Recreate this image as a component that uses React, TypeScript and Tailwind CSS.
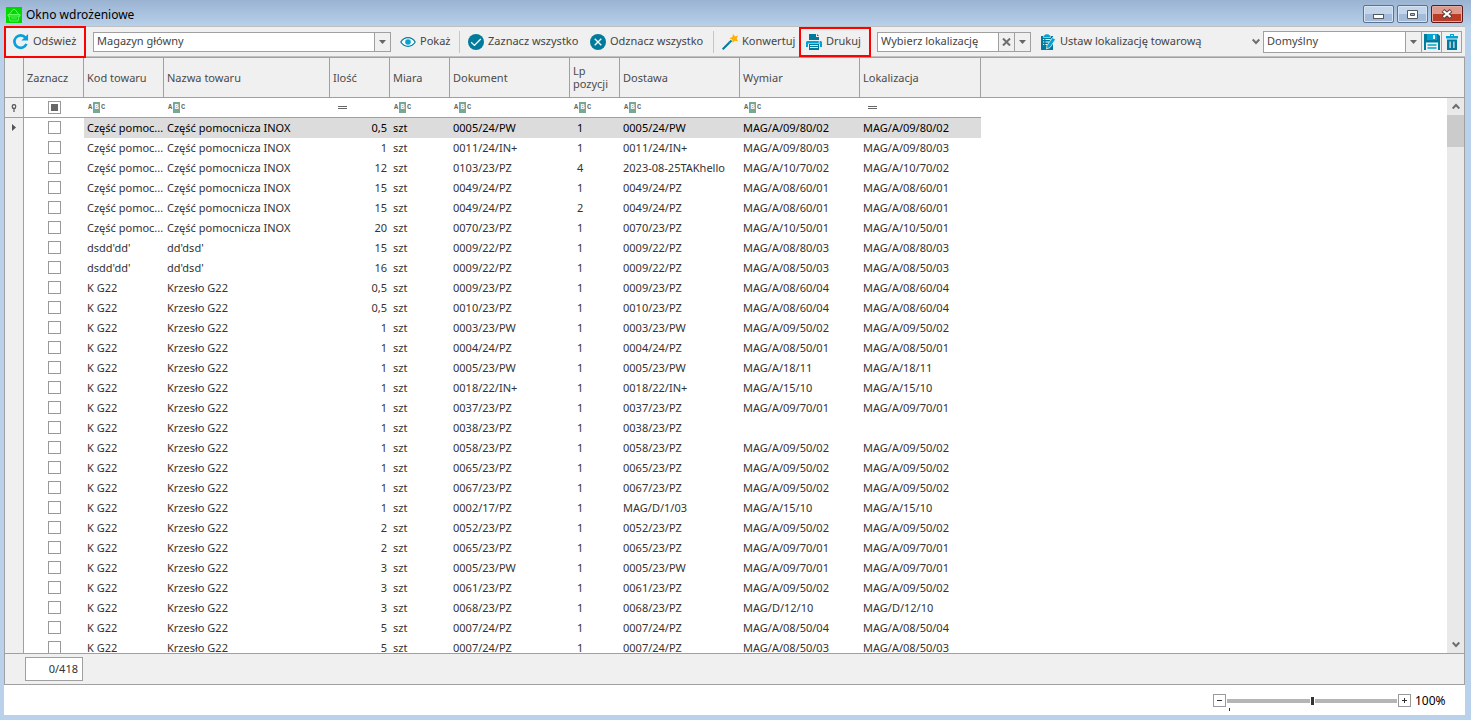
import type { ReactNode } from "react";

type Row = [
  kod: string,
  nazwa: string,
  ilosc: string,
  dokument: string,
  lp: string,
  dostawa: string,
  wymiar: string,
  lokalizacja: string
];

const INOX = "Część pomocnicza INOX";
const INOX_KOD = "Część pomoc...";
const KRZESLO = "Krzesło G22";

const rows: Row[] = [
  [INOX_KOD, INOX, "0,5", "0005/24/PW", "1", "0005/24/PW", "MAG/A/09/80/02", "MAG/A/09/80/02"],
  [INOX_KOD, INOX, "1", "0011/24/IN+", "1", "0011/24/IN+", "MAG/A/09/80/03", "MAG/A/09/80/03"],
  [INOX_KOD, INOX, "12", "0103/23/PZ", "4", "2023-08-25TAKhello", "MAG/A/10/70/02", "MAG/A/10/70/02"],
  [INOX_KOD, INOX, "15", "0049/24/PZ", "1", "0049/24/PZ", "MAG/A/08/60/01", "MAG/A/08/60/01"],
  [INOX_KOD, INOX, "15", "0049/24/PZ", "2", "0049/24/PZ", "MAG/A/08/60/01", "MAG/A/08/60/01"],
  [INOX_KOD, INOX, "20", "0070/23/PZ", "1", "0070/23/PZ", "MAG/A/10/50/01", "MAG/A/10/50/01"],
  ["dsdd'dd'", "dd'dsd'", "15", "0009/22/PZ", "1", "0009/22/PZ", "MAG/A/08/80/03", "MAG/A/08/80/03"],
  ["dsdd'dd'", "dd'dsd'", "16", "0009/22/PZ", "1", "0009/22/PZ", "MAG/A/08/50/03", "MAG/A/08/50/03"],
  ["K G22", KRZESLO, "0,5", "0009/23/PZ", "1", "0009/23/PZ", "MAG/A/08/60/04", "MAG/A/08/60/04"],
  ["K G22", KRZESLO, "0,5", "0010/23/PZ", "1", "0010/23/PZ", "MAG/A/08/60/04", "MAG/A/08/60/04"],
  ["K G22", KRZESLO, "1", "0003/23/PW", "1", "0003/23/PW", "MAG/A/09/50/02", "MAG/A/09/50/02"],
  ["K G22", KRZESLO, "1", "0004/24/PZ", "1", "0004/24/PZ", "MAG/A/08/50/01", "MAG/A/08/50/01"],
  ["K G22", KRZESLO, "1", "0005/23/PW", "1", "0005/23/PW", "MAG/A/18/11", "MAG/A/18/11"],
  ["K G22", KRZESLO, "1", "0018/22/IN+", "1", "0018/22/IN+", "MAG/A/15/10", "MAG/A/15/10"],
  ["K G22", KRZESLO, "1", "0037/23/PZ", "1", "0037/23/PZ", "MAG/A/09/70/01", "MAG/A/09/70/01"],
  ["K G22", KRZESLO, "1", "0038/23/PZ", "1", "0038/23/PZ", "", ""],
  ["K G22", KRZESLO, "1", "0058/23/PZ", "1", "0058/23/PZ", "MAG/A/09/50/02", "MAG/A/09/50/02"],
  ["K G22", KRZESLO, "1", "0065/23/PZ", "1", "0065/23/PZ", "MAG/A/09/50/02", "MAG/A/09/50/02"],
  ["K G22", KRZESLO, "1", "0067/23/PZ", "1", "0067/23/PZ", "MAG/A/09/50/02", "MAG/A/09/50/02"],
  ["K G22", KRZESLO, "1", "0002/17/PZ", "1", "MAG/D/1/03", "MAG/A/15/10", "MAG/A/15/10"],
  ["K G22", KRZESLO, "2", "0052/23/PZ", "1", "0052/23/PZ", "MAG/A/09/50/02", "MAG/A/09/50/02"],
  ["K G22", KRZESLO, "2", "0065/23/PZ", "1", "0065/23/PZ", "MAG/A/09/70/01", "MAG/A/09/70/01"],
  ["K G22", KRZESLO, "3", "0005/23/PW", "1", "0005/23/PW", "MAG/A/09/70/01", "MAG/A/09/70/01"],
  ["K G22", KRZESLO, "3", "0061/23/PZ", "1", "0061/23/PZ", "MAG/A/09/50/02", "MAG/A/09/50/02"],
  ["K G22", KRZESLO, "3", "0068/23/PZ", "1", "0068/23/PZ", "MAG/D/12/10", "MAG/D/12/10"],
  ["K G22", KRZESLO, "5", "0007/24/PZ", "1", "0007/24/PZ", "MAG/A/08/50/04", "MAG/A/08/50/04"],
  ["K G22", KRZESLO, "5", "0007/24/PZ", "1", "0007/24/PZ", "MAG/A/08/50/03", "MAG/A/08/50/03"],
];

const columns = [
  { name: "Zaznacz", width: "w-[60px]", filter: "check" },
  { name: "Kod towaru", width: "w-[80px]", filter: "abc" },
  { name: "Nazwa towaru", width: "w-[166px]", filter: "abc" },
  { name: "Ilość", width: "w-[60px]", filter: "eq" },
  { name: "Miara", width: "w-[60px]", filter: "abc" },
  { name: "Dokument", width: "w-[120px]", filter: "abc" },
  { name: "Lp pozycji", width: "w-[50px]", filter: "abc" },
  { name: "Dostawa", width: "w-[120px]", filter: "abc" },
  { name: "Wymiar", width: "w-[120px]", filter: "abc" },
  { name: "Lokalizacja", width: "w-[121px]", filter: "eq" },
];

function BasketIcon() {
  return (
    <svg width="16" height="16" viewBox="0 0 16 16" className="bg-[#00d800]" fill="none" stroke="#7dff7d">
      <path d="M2 7.500h12v1.500H2zM3 9l1 5h8l1-5M3.500 7L7 2.500h2L12.500 7M6 10v2.500M8 10v2.500M10 10v2.500" strokeWidth=".8" />
    </svg>
  );
}

function RefreshIcon() {
  return (
    <svg width="17" height="17" viewBox="0 0 18 18" fill="none">
      <path d="M14.300 5A6.600 6.600 0 1 0 15.300 11.500" stroke="#0a9fdc" strokeWidth="2.800" />
      <path d="M17 1v7h-7z" fill="#0a9fdc" />
    </svg>
  );
}

function EyeIcon() {
  return (
    <svg width="16" height="16" viewBox="0 0 16 16" fill="none">
      <path d="M.8 8C4.500 2.200 11.500 2.200 15.200 8 11.500 13.800 4.500 13.800.8 8z" fill="#fff" stroke="#007b9c" strokeWidth="1.200" />
      <circle cx="8" cy="8" r="2.800" fill="#00a3d3" />
    </svg>
  );
}

function CheckCircleIcon() {
  return (
    <svg width="16" height="16" viewBox="0 0 16 16" fill="none">
      <circle cx="8" cy="8" r="8" fill="#007b9c" />
      <path d="M3.200 8.200l3.200 3.200 6.400-6.400" stroke="#fff" strokeWidth="1.300" />
    </svg>
  );
}

function CrossCircleIcon() {
  return (
    <svg width="16" height="16" viewBox="0 0 16 16" fill="none">
      <circle cx="8" cy="8" r="8" fill="#007b9c" />
      <path d="M4.700 4.700l6.600 6.600M11.300 4.700l-6.600 6.600" stroke="#fff" strokeWidth="1.300" />
    </svg>
  );
}

function WandIcon() {
  return (
    <svg width="16" height="16" viewBox="0 0 16 16" fill="none">
      <path d="M.7 15.300L9.500 6.500" stroke="#007b9c" strokeWidth="2" />
      <path d="M7 8.800l1-1" stroke="#00a3d3" strokeWidth="2" />
      <path d="M11 0l2 2.400L16 1.500l-1.300 3L16 7.300l-3.200-.6-2.200 2-.3-3L7.500 4.200l2.900-1.300z" fill="#ffb000" />
    </svg>
  );
}

function PrinterIcon() {
  return (
    <svg width="16" height="16" viewBox="0 0 16 16">
      <path d="M3 0h7v3h3v3H3z" fill="#007b9c" />
      <path d="M11 0l2 2h-2z" fill="#007b9c" />
      <path d="M1 7h14l1 1v5h-2V9.500H2V13H0V8z" fill="#00a3d3" />
      <path d="M3 10h10v6H3z" fill="#007b9c" />
      <path d="M4 11.500h8M4 13.500h8" stroke="#f0f0f0" />
      <path d="M12.500 8h1.500" stroke="#fff" />
    </svg>
  );
}

function ClipboardIcon() {
  return (
    <svg width="16" height="16" viewBox="0 0 16 16">
      <path d="M1 2h12v14H1z" fill="#007b9c" />
      <path d="M3.500 1H5V0h4v1h1.500v2.500h-7z" fill="#00a3d3" stroke="#f0f0f0" strokeWidth=".6" />
      <path d="M3 5.500h1.200M5.500 5.500h5M3 8h1.200M5.500 8h3.500M3 10.500h1.200M5.500 10.500h2" stroke="#fff" />
      <path d="M12.500 3.500l3 2L10 13.500 6.500 15l.5-3.500z" fill="#00a3d3" stroke="#f0f0f0" strokeWidth=".8" />
    </svg>
  );
}

function SaveIcon() {
  return (
    <svg width="16" height="16" viewBox="0 0 16 16">
      <path d="M0 0h14l2 2v14H0z" fill="#007b9c" />
      <path d="M3 0h10v6H3z" fill="#00a3d3" />
      <path d="M9 1h2v4H9z" fill="#f0f0f0" />
      <path d="M2 8.500h12V16H2z" fill="#f0f0f0" />
      <path d="M3.500 11h9M3.500 14h9" stroke="#00a3d3" strokeWidth="1.300" />
    </svg>
  );
}

function TrashIcon() {
  return (
    <svg width="16" height="16" viewBox="0 0 16 16">
      <path d="M2 2h4V0h4v2h4v2.500H2zM7 1v1h2V1z" fill="#00a3d3" fillRule="evenodd" />
      <path d="M3 5.500h10V16H3zM5.500 7.500V14h1.200V7.500zM9.300 7.500V14h1.200V7.500z" fill="#007b9c" fillRule="evenodd" />
    </svg>
  );
}

function ArrowDown() {
  return (
    <svg width="7" height="4" viewBox="0 0 7 4">
      <path d="M0 0h7L3.500 4z" fill="#666" />
    </svg>
  );
}

function Chevron({ up = false }: { up?: boolean }) {
  return (
    <svg width="8" height="7" viewBox="0 0 8 7" fill="none" stroke="#6e6e6e" strokeWidth="2">
      <path d={up ? "M.7 5.500L4 2l3.300 3.500" : "M.7 1.500L4 5l3.300-3.500"} />
    </svg>
  );
}

function Separator() {
  return <div className="h-[22px] w-px shrink-0 bg-[#c6c6c6]" />;
}

interface ToolButtonProps {
  icon: ReactNode;
  label: string;
  className: string;
}

function ToolButton({ icon, label, className }: ToolButtonProps) {
  return (
    <button type="button" className={`flex shrink-0 items-center gap-1 whitespace-nowrap ${className}`}>
      {icon}
      {label}
    </button>
  );
}

interface ComboProps {
  label: string;
  value: string;
  className: string;
}

function Combo({ label, value, className }: ComboProps) {
  return (
    <div className={`grid shrink-0 border border-[#a0a0a0] bg-white ${className}`}>
      <select
        aria-label={label}
        className="col-start-1 row-start-1 h-full w-full appearance-none pr-5 pl-[3px] outline-none"
      >
        <option>{value}</option>
      </select>
      <span className="pointer-events-none col-start-1 row-start-1 flex h-full w-4 items-center justify-center justify-self-end border-l border-[#a0a0a0] bg-[#f0f0f0]">
        <ArrowDown />
      </span>
    </div>
  );
}

function FilterMark({ kind }: { kind: string }) {
  if (kind === "check") {
    return (
      <input
        type="checkbox"
        aria-label="Zaznacz wszystkie wiersze"
        className="ml-6 block size-[13px] appearance-none border border-[#999] bg-[#666] shadow-[inset_0_0_0_2px_#fff]"
      />
    );
  }
  if (kind === "eq") {
    return (
      <svg width="9" height="3" viewBox="0 0 9 3" className="ml-2">
        <path d="M0 .5h9M0 2.500h9" stroke="#666" />
      </svg>
    );
  }
  return (
    <span className="ml-1 flex h-[11px] items-center font-['Liberation_Mono',monospace] text-[7px] leading-[11px] font-bold text-[#666]">
      <span className="w-[5px]">A</span>
      <span className="w-[7px] bg-[#7aa794] text-center text-white">B</span>
      <span className="pl-px">C</span>
    </span>
  );
}

function TitleBar() {
  return (
    <header className="flex h-[26px] shrink-0 items-center justify-between bg-linear-to-b from-[#9ab3d1] to-[#b8d0ea] pr-2 pl-[6px]">
      <div className="flex items-center gap-1 pt-1">
        <BasketIcon />
        <h1 className="text-xs text-black">Okno wdrożeniowe</h1>
      </div>
      <div className="flex gap-[3px] pt-[2px]">
        <button
          type="button"
          aria-label="Minimalizuj"
          className="flex h-[18px] w-[31px] items-center justify-center rounded-xs border border-[#5b7290] bg-linear-to-b from-[#c3d5ea] from-50% to-[#a3bbd8] to-50% pt-1 shadow-[inset_0_0_0_1px_#d5e3f2]"
        >
          <span className="h-[5px] w-[11px] border border-[#53585f] bg-white" />
        </button>
        <button
          type="button"
          aria-label="Przywróć"
          className="flex h-[18px] w-[31px] items-center justify-center rounded-xs border border-[#5b7290] bg-linear-to-b from-[#c3d5ea] from-50% to-[#a3bbd8] to-50% shadow-[inset_0_0_0_1px_#d5e3f2]"
        >
          <svg width="11" height="9" viewBox="0 0 11 9">
            <path d="M.5.5h10v8H.5z" fill="#fff" stroke="#53585f" />
            <path d="M3.500 3.500h4v2h-4z" fill="#a3bbd8" stroke="#53585f" />
          </svg>
        </button>
        <button
          type="button"
          aria-label="Zamknij"
          className="flex h-[18px] w-8 items-center justify-center rounded-xs border border-[#5c1a18] bg-linear-to-b from-[#dd9a8c] from-50% to-[#bb3d27] to-50% shadow-[inset_0_0_0_1px_#e5ada2]"
        >
          <svg width="12" height="10" viewBox="0 0 12 10">
            <path d="M2 1.500l8 7M10 1.500l-8 7" stroke="#53383c" strokeWidth="4" />
            <path d="M2.500 2l7 6M9.500 2l-7 6" stroke="#fff" strokeWidth="2.200" />
          </svg>
        </button>
      </div>
    </header>
  );
}

function Toolbar() {
  return (
    <div className="flex h-[31px] shrink-0 items-center border-y border-[#c0c0c0] bg-[#f0f0f0] pr-[3px] text-[11px] text-[#444]">
      <ToolButton
        icon={<RefreshIcon />}
        label="Odśwież"
        className="relative z-10 h-8 w-[82px] border-2 border-[#fd0000] pl-[6px]"
      />
      <Combo label="Magazyn" value="Magazyn główny" className="ml-[7px] h-5 w-[298px]" />
      <ToolButton icon={<EyeIcon />} label="Pokaż" className="ml-[9px] w-[59px]" />
      <Separator />
      <ToolButton icon={<CheckCircleIcon />} label="Zaznacz wszystko" className="ml-2 w-[122px]" />
      <ToolButton icon={<CrossCircleIcon />} label="Odznacz wszystko" className="w-[123px]" />
      <Separator />
      <ToolButton icon={<WandIcon />} label="Konwertuj" className="ml-2 w-[77px]" />
      <ToolButton
        icon={<PrinterIcon />}
        label="Drukuj"
        className="relative z-10 h-[30px] w-[72px] border-2 border-[#fd0000] pl-[5px]"
      />
      <div className="ml-[6px] flex h-5 w-[154px] shrink-0 border border-[#a0a0a0] bg-white">
        <input
          type="text"
          aria-label="Lokalizacja"
          defaultValue="Wybierz lokalizację"
          className="min-w-0 flex-1 pl-[3px] outline-none"
        />
        <button
          type="button"
          aria-label="Wyczyść"
          className="flex w-4 items-center justify-center border-l border-[#a0a0a0] bg-[#f0f0f0]"
        >
          <svg width="9" height="8" viewBox="0 0 9 8">
            <path d="M1 .5l7 7M8 .5l-7 7" stroke="#6e6e6e" strokeWidth="2" />
          </svg>
        </button>
        <button
          type="button"
          aria-label="Rozwiń listę"
          className="flex w-4 items-center justify-center border-l border-[#a0a0a0] bg-[#f0f0f0]"
        >
          <ArrowDown />
        </button>
      </div>
      <ToolButton icon={<ClipboardIcon />} label="Ustaw lokalizację towarową" className="ml-[9px]" />
      <div className="ml-auto flex shrink-0 items-center gap-[3px]">
        <button type="button" aria-label="Więcej">
          <Chevron />
        </button>
        <div className="flex">
          <Combo label="Układ" value="Domyślny" className="h-[22px] w-[159px]" />
          <button
            type="button"
            aria-label="Zapisz układ"
            className="flex h-[22px] w-5 items-center justify-center border-y border-r border-[#a0a0a0]"
          >
            <SaveIcon />
          </button>
          <button
            type="button"
            aria-label="Usuń układ"
            className="flex h-[22px] w-5 items-center justify-center border-y border-r border-[#a0a0a0]"
          >
            <TrashIcon />
          </button>
        </div>
      </div>
    </div>
  );
}

function Grid() {
  return (
    <table className="w-full table-fixed border-separate border-spacing-0 text-[11px] leading-[13px] text-[#333]">
      <colgroup>
        <col className="w-[19px]" />
        {columns.map((c) => (
          <col key={c.name} className={c.width} />
        ))}
        <col />
      </colgroup>
      <thead>
        <tr className="h-10 bg-[#f0f0f0] text-left text-[#4b4b4b]">
          <th className="border-r border-b border-[#a0a0a0] p-0" />
          {columns.map((c) => (
            <th key={c.name} className="border-r border-b border-[#a0a0a0] pt-0 pr-1 pb-px pl-[3px] font-normal">
              {c.name}
            </th>
          ))}
          <th className="border-b border-[#a0a0a0] p-0" />
        </tr>
        <tr className="h-5">
          <td className="border-r border-b border-[#a0a0a0] bg-[#f0f0f0] p-0">
            <svg width="6" height="8" viewBox="0 0 6 8" className="mx-auto">
              <circle cx="3" cy="2.500" r="1.800" fill="none" stroke="#555" strokeWidth="1.200" />
              <path d="M1.500 4.500h3M3 4.500V8" stroke="#555" strokeWidth="1.200" />
            </svg>
          </td>
          {columns.map((c) => (
            <td key={c.name} className="border-b border-[#a0a0a0] p-0">
              <FilterMark kind={c.filter} />
            </td>
          ))}
          <td className="p-0" />
        </tr>
      </thead>
      <tbody>
        {rows.map(([kod, nazwa, ilosc, dokument, lp, dostawa, wymiar, lokalizacja], i) => (
          <tr
            key={i}
            className={
              i === 0
                ? "h-5 text-black *:[td]:pt-0 *:[td]:pb-px [&>td:nth-child(n+3):nth-child(-n+11)]:bg-[#dcdcdc]"
                : "h-5 *:[td]:pt-0 *:[td]:pb-px"
            }
          >
            <td className="border-r border-[#a0a0a0] bg-[#f0f0f0] px-0">
              {i === 0 && (
                <svg width="4" height="7" viewBox="0 0 4 7" className="mx-auto">
                  <path d="M0 0l4 3.500L0 7z" fill="#555" />
                </svg>
              )}
            </td>
            <td className="px-0">
              <input
                type="checkbox"
                aria-label={`Zaznacz wiersz ${i + 1}`}
                className="ml-6 block size-[13px] appearance-none border border-[#999] bg-white checked:bg-[#666]"
              />
            </td>
            <td className="pr-0 pl-[3px] whitespace-nowrap">{kod}</td>
            <td className="truncate pr-1 pl-[3px]">{nazwa}</td>
            <td className="pr-[3px] pl-0 text-right">{ilosc}</td>
            <td className="pr-1 pl-[3px]">szt</td>
            <td className="pr-1 pl-[3px]">{dokument}</td>
            <td className="pr-1 pl-[7px]">{lp}</td>
            <td className="pr-1 pl-[3px] whitespace-nowrap">{dostawa}</td>
            <td className="pr-1 pl-[3px]">{wymiar}</td>
            <td className="pr-1 pl-[3px]">{lokalizacja}</td>
            <td />
          </tr>
        ))}
      </tbody>
    </table>
  );
}

function ScrollBar() {
  return (
    <div className="flex w-[17px] shrink-0 flex-col bg-[#e9e9e9]">
      <div className="h-10 shrink-0 border-b border-[#a0a0a0] bg-[#f0f0f0]" />
      <button type="button" aria-label="Przewiń w górę" className="flex h-[17px] items-center justify-center">
        <Chevron up />
      </button>
      <div className="h-8 bg-[#cbcbcb]" />
      <button
        type="button"
        aria-label="Przewiń w dół"
        className="mt-auto flex h-[17px] items-center justify-center"
      >
        <Chevron />
      </button>
    </div>
  );
}

function ZoomBar() {
  return (
    <div className="flex h-[30px] shrink-0 items-center justify-end bg-white pt-px pr-[22px] text-xs text-black">
      <button
        type="button"
        aria-label="Pomniejsz"
        className="flex size-[13px] items-center justify-center border border-[#999]"
      >
        <svg width="5" height="5" viewBox="0 0 5 5">
          <path d="M0 2.500h5" stroke="#333" />
        </svg>
      </button>
      <div className="relative mx-px flex h-[13px] w-[170px] items-center">
        <input
          type="range"
          aria-label="Powiększenie"
          min={0}
          max={200}
          defaultValue={100}
          className="h-1 w-full appearance-none bg-[#b5b5b5] [&::-webkit-slider-thumb]:h-2 [&::-webkit-slider-thumb]:w-[5px] [&::-webkit-slider-thumb]:appearance-none [&::-webkit-slider-thumb]:border-x [&::-webkit-slider-thumb]:border-white [&::-webkit-slider-thumb]:bg-[#333]"
        />
        <span className="absolute top-[14px] left-[2px] h-[3px] w-px bg-[#333]" />
      </div>
      <button
        type="button"
        aria-label="Powiększ"
        className="flex size-[13px] items-center justify-center border border-[#999]"
      >
        <svg width="5" height="5" viewBox="0 0 5 5">
          <path d="M0 2.500h5M2.500 0v5" stroke="#333" />
        </svg>
      </button>
      <span className="w-8 pl-1">100%</span>
    </div>
  );
}

export default function App() {
  return (
    <div className="flex h-screen flex-col overflow-hidden bg-[#b9d1ea] font-['Noto_Sans',sans-serif]">
      <TitleBar />
      <main className="mr-[6px] mb-[5px] ml-1 flex min-h-0 flex-1 flex-col bg-white">
        <Toolbar />
        <section className="flex min-h-0 flex-1 flex-col border border-[#a0a0a0]">
          <div className="flex min-h-0 flex-1 items-stretch overflow-hidden">
            <div className="min-w-0 flex-1 overflow-hidden">
              <Grid />
            </div>
            <ScrollBar />
          </div>
          <div className="flex h-[31px] shrink-0 items-center border-t border-[#a0a0a0] bg-[#f0f0f0] pl-5">
            <output className="flex h-6 w-[58px] items-center justify-end border border-[#a0a0a0] bg-white pr-1 text-[11px] text-[#333]">
              0/418
            </output>
          </div>
        </section>
        <ZoomBar />
      </main>
    </div>
  );
}
